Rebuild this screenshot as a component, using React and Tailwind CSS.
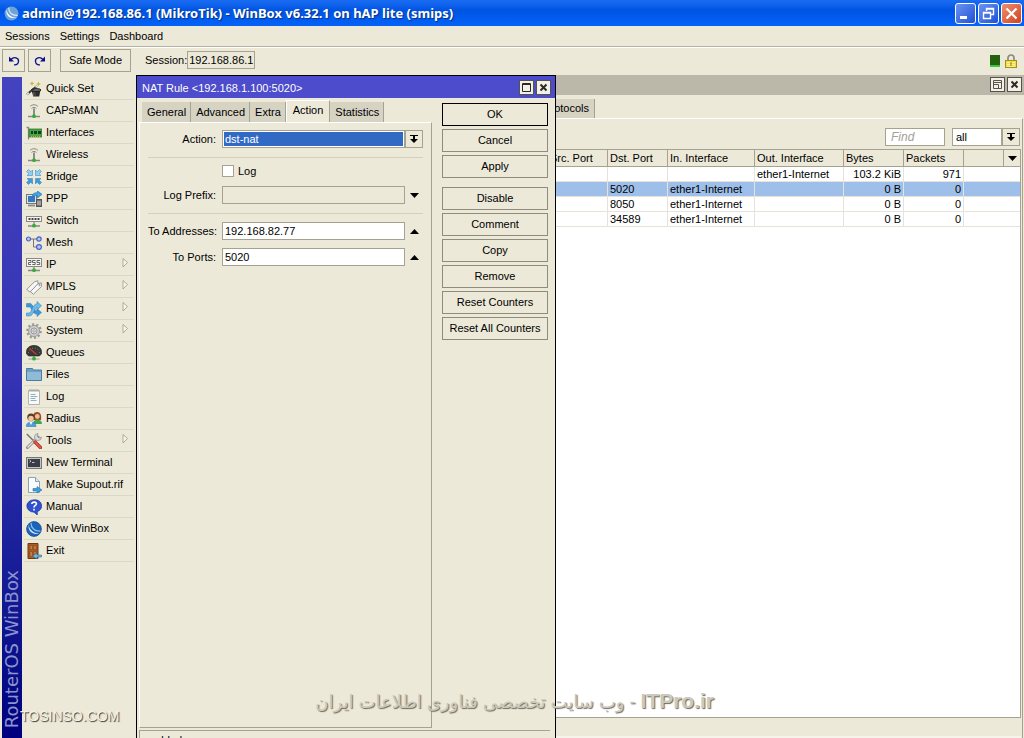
import React, { useState } from "react";

const icons = {
  "Quick Set": (
    <>
      <path d="M5.500 9h9l-1.300 6.500h-6z" fill="#2b2b2b" />
      <path d="M7.500 11v4M9 11v4" stroke="#666" strokeWidth=".8" />
      <ellipse cx="10" cy="9" rx="5" ry="1.500" fill="#6a6a6a" stroke="#111" strokeWidth=".8" />
      <path d="M.8 13.500L11 5" stroke="#333" strokeWidth="2" />
      <path d="M.8 13.500l2-1.700M9.500 6.300l1.500-1.300" stroke="#f4f4f4" strokeWidth="1.500" />
      <path d="M6 0l.7 1.800L8.500 2.500l-1.800.7L6 5l-.7-1.800L3.500 2.500l1.800-.7zM12.500.5l.7 1.800 1.800.7-1.800.7-.7 1.800-.7-1.800-1.800-.7 1.800-.7z" fill="#c9b52c" />
    </>
  ),
  CAPsMAN: <Antenna />,
  Interfaces: (
    <>
      <path d="M.5 2.500h2v12" fill="none" stroke="#8a8a8a" strokeWidth="1.300" />
      <rect x="3" y="4" width="13" height="8" fill="#4aa54a" stroke="#226d22" strokeWidth=".7" />
      <path d="M5 6h2v3H5zM8 6h3v3H8zM12 6h3v3h-3z" fill="#123f16" />
      <path d="M5 12h9" stroke="#d6c24c" strokeWidth="1.500" strokeDasharray="1 1" />
    </>
  ),
  Wireless: <Antenna />,
  Bridge: (
    <g stroke="#2c7cb8" strokeWidth=".5">
      <path d="M.5 2.500l2-2 2.300 2.300L6.500 1v5.500H1l1.800-1.700z" fill="#8fd0f2" />
      <path d="M15.500 2.500l-2-2-2.300 2.300L9.500 1v5.500H15l-1.800-1.700z" fill="#8fd0f2" />
      <path d="M.5 13.500l2 2 2.300-2.300L6.500 15V9.500H1l1.800 1.700z" fill="#3c9bdb" />
      <path d="M15.500 13.500l-2 2-2.300-2.300L9.500 15V9.500H15l-1.800 1.700z" fill="#3c9bdb" />
    </g>
  ),
  PPP: (
    <>
      <rect x=".5" y="3.500" width="10" height="9" fill="#e4e4dc" stroke="#777" />
      <rect x="2" y="5" width="7" height="6" fill="#3279c4" />
      <path d="M2 14.500h7" stroke="#888" strokeWidth="1.800" />
      <rect x="10.500" y="8.500" width="5" height="7" fill="#777" stroke="#555" />
      <path d="M11 11h4M11 13h4" stroke="#ccc" />
      <path d="M6.500 5c0-2.500 2-3.500 5-3.200V0L16 3.300 11.500 7V5C9.500 4.500 8 4.500 6.500 5z" fill="#45a4e5" stroke="#1c68a8" strokeWidth=".6" />
    </>
  ),
  Switch: (
    <>
      <rect x=".5" y="3.500" width="15" height="5" fill="#f5f5ef" stroke="#888" />
      <path d="M2.500 6h11" stroke="#444" strokeWidth="2" strokeDasharray="2 1" />
      <path d="M8 9v4" stroke="#777" />
      <path d="M2 13h12" stroke="#888" strokeWidth="1.500" />
      <circle cx="8" cy="12.700" r="1.900" fill="#38a838" />
    </>
  ),
  Mesh: (
    <>
      <path d="M4 4h8M7.500 4v8H12" fill="none" stroke="#777" />
      <g fill="#b8c8f8" stroke="#4860c8" strokeWidth="1.200">
        <circle cx="2.500" cy="4" r="2" />
        <circle cx="13" cy="4" r="2.200" />
        <circle cx="13" cy="12" r="2.400" />
      </g>
    </>
  ),
  IP: (
    <>
      <rect x=".5" y="1.500" width="15" height="8" fill="#f7f7f2" stroke="#888" />
      <path d="M2 3.500h3v2H2.500v2H5M9.500 3.500h-3v2h2.700v2H6.300M14 3.500h-3v2h2.700v2h-2.900" fill="none" stroke="#555" strokeWidth=".9" />
      <path d="M8 10v3" stroke="#777" />
      <path d="M2 13.500h12" stroke="#888" strokeWidth="1.500" />
      <circle cx="8" cy="13.200" r="1.900" fill="#38a838" />
    </>
  ),
  MPLS: (
    <g fill="#f7f7f7" stroke="#8a8a8a" strokeWidth=".9">
      <path d="M.7 10.500L8.500 2.700l3.300-.9.200 3.700-8 7.500z" />
      <path d="M4.300 12.700L12 4.700l3.300-.9.200 3.700-8 7.700z" />
      <circle cx="13.500" cy="6" r=".7" />
    </g>
  ),
  Routing: (
    <g fill="#3f97d5" stroke="#2474b4" strokeWidth=".5">
      <path d="M.5 2.500H4c3 0 4 7.500 7 7.500V7.500l4.500 4-4.500 4V13C6 13 5.500 6 3.500 6h-3z" />
      <path d="M.5 12H3c3 0 3-9 8-9V.5l4.500 4.300L11 9V6.500C8 6.500 8 15 3 15H.5z" fill="#6dbbea" />
    </g>
  ),
  System: (
    <>
      <circle cx="8" cy="8" r="6.700" fill="none" stroke="#999" strokeWidth="2.200" strokeDasharray="2.200 2" />
      <circle cx="8" cy="8" r="5.500" fill="#cfcfcf" stroke="#999" />
      <circle cx="8" cy="8" r="3" fill="#e2e2e0" stroke="#999" />
      <circle cx="8" cy="8" r="1.300" fill="#f2f0e5" stroke="#888" strokeWidth=".7" />
    </>
  ),
  Queues: (
    <>
      <path d="M.3 8.500C0 3 3.500.5 8 .5s8 2.500 7.700 8L13.500 11h-11z" fill="#383838" stroke="#1c1c1c" strokeWidth=".6" />
      <path d="M2.500 8a5.500 5 0 0 1 11 0" fill="none" stroke="#888" strokeDasharray="1 2" />
      <path d="M3.500 3.500l7 6" stroke="#d03535" strokeWidth="1.300" />
      <path d="M8 11v3" stroke="#777" />
      <path d="M2.500 14h11" stroke="#999" />
      <circle cx="8" cy="13.700" r="1.900" fill="#38b038" />
    </>
  ),
  Files: (
    <>
      <path d="M.5 13.500v-12h6l1 1.500h8v10.500z" fill="#6d9fc4" stroke="#4a7ca4" />
      <path d="M1 5h14v8H1z" fill="#8fbbd9" />
    </>
  ),
  Log: (
    <>
      <path d="M2.500 1.500h11v14h-11z" fill="#fafaf5" stroke="#b4b4ae" />
      <path d="M4 0v3M6 0v3M8 0v3M10 0v3M12 0v3" stroke="#999" strokeWidth=".8" />
      <path d="M4.500 5.500h5M4.500 7.500h7M4.500 9.500h5M4.500 11.500h6" stroke="#8fb0c9" />
    </>
  ),
  Radius: (
    <>
      <path d="M7.500 9c-1-5 0-8 3.500-8s4.700 3 4 8z" fill="#9c4b26" />
      <circle cx="11.300" cy="5.500" r="2.400" fill="#efbd91" />
      <path d="M7 13c0-3 2-4.500 4.500-4.500S16 10 16 13z" fill="#45a556" />
      <circle cx="5" cy="6.300" r="3.700" fill="#593a24" />
      <circle cx="5" cy="7.500" r="2.700" fill="#f3c59c" />
      <path d="M.3 15.500c0-3 2-4.500 4.700-4.500s5 1.500 5 4.500z" fill="#4f9de0" stroke="#2a6ba8" strokeWidth=".5" />
      <path d="M3.500 11L5 14l1.500-3z" fill="#fff" />
    </>
  ),
  Tools: (
    <>
      <path d="M.8 1l9 9" stroke="#777" strokeWidth="1.600" />
      <path d="M1.500 14.500L12 4" stroke="#888" strokeWidth="3" strokeLinecap="round" />
      <path d="M1.500 14.500L12 4" stroke="#e0e0e0" strokeWidth="1.400" />
      <path d="M12 .5a3.500 3.500 0 1 0 3.500 3.700L12.800 5 11 3.200z" fill="#ddd" stroke="#888" strokeWidth=".7" />
      <path d="M9 9l5.500 5.500" stroke="#a82c24" strokeWidth="3.400" strokeLinecap="round" />
      <path d="M9 9l5.500 5.500" stroke="#e2574c" strokeWidth="1.800" strokeLinecap="round" />
    </>
  ),
  "New Terminal": (
    <>
      <rect x=".5" y="2.500" width="15" height="11" fill="#c5c5c5" stroke="#777" />
      <rect x="2" y="4" width="12" height="8" fill="#3c3c46" />
      <path d="M3.500 5l1.500 1.200-1.500 1.200M6 7.500h2.500" fill="none" stroke="#eee" strokeWidth=".8" />
    </>
  ),
  "Make Supout.rif": (
    <>
      <path d="M2.500.5h7l4 4v11h-11z" fill="#fbfbfb" stroke="#8ba2b4" />
      <path d="M9.500.5v4h4" fill="#dce8f0" stroke="#8ba2b4" />
      <path d="M7 11.500h4v-2l5 3.500-5 3v-2H7z" fill="#3f9fdd" stroke="#2270a8" strokeWidth=".6" />
    </>
  ),
  Manual: (
    <>
      <path d="M8 .8a7.200 6.200 0 0 1 3.300 11.900V16l-3.300-2.800A7.200 6.200 0 1 1 8 .8z" fill="#2f50d0" stroke="#162d91" strokeWidth=".6" />
      <path d="M5.800 5c.3-2.700 4.900-2.400 4.600 0C10.200 6.500 8 6.500 8 8.500M8 9.800v1.600" fill="none" stroke="#fff" strokeWidth="1.600" />
    </>
  ),
  "New WinBox": <Globe />,
  Exit: (
    <>
      <path d="M2 .5h10v15H2z" fill="#a85d26" stroke="#6d3812" />
      <path d="M4 2.500h2.500v4H4zM7.800 2.500h2.500v4H7.800zM4 8.500h2.500v5H4zM7.800 8.500h2.500v3H7.800z" fill="#c98043" stroke="#7f4519" strokeWidth=".6" />
      <path d="M15.500 12H11v-2l-4.500 3 4.500 3v-2h4.500z" fill="#6db9ea" stroke="#2d6d9c" strokeWidth=".6" />
    </>
  ),
};

const menuItems = [
  "Quick Set",
  "CAPsMAN",
  "Interfaces",
  "Wireless",
  "Bridge",
  "PPP",
  "Switch",
  "Mesh",
  "IP",
  "MPLS",
  "Routing",
  "System",
  "Queues",
  "Files",
  "Log",
  "Radius",
  "Tools",
  "New Terminal",
  "Make Supout.rif",
  "Manual",
  "New WinBox",
  "Exit",
];

const withSubmenu = ["IP", "MPLS", "Routing", "System", "Tools"];

const rules = [
  { dst: "", inIf: "", outIf: "ether1-Internet", bytes: "103.2 KiB", packets: "971" },
  { dst: "5020", inIf: "ether1-Internet", outIf: "", bytes: "0 B", packets: "0" },
  { dst: "8050", inIf: "ether1-Internet", outIf: "", bytes: "0 B", packets: "0" },
  { dst: "34589", inIf: "ether1-Internet", outIf: "", bytes: "0 B", packets: "0" },
];

function Antenna() {
  return (
    <>
      <path d="M4 3.500c2-2.300 6-2.300 8 0M5.500 5.500c1.500-1.500 3.500-1.500 5 0" fill="none" stroke="#8b8b8b" />
      <path d="M8 5.500v7" stroke="#666" strokeWidth="1.400" />
      <path d="M2 13.500h12" stroke="#888" strokeWidth="1.500" />
      <circle cx="8" cy="13.200" r="1.900" fill="#38a838" />
    </>
  );
}

function Globe() {
  return (
    <>
      <circle cx="8" cy="8" r="7.400" fill="#1a64bc" stroke="#0e4288" strokeWidth=".7" />
      <path d="M2.500 4C2 11 7 14 13.500 12.500 8 12.500 4 9.500 2.500 4z" fill="#d5e9fb" />
      <path d="M5 1.800C5 7 8.500 10.500 14.500 10" fill="none" stroke="#8fc0ee" strokeWidth="1.200" />
    </>
  );
}

function Icon({ children }) {
  return (
    <svg viewBox="0 0 16 16" className="h-4 w-4 shrink-0" aria-hidden="true">
      {children}
    </svg>
  );
}

function CloseGlyph() {
  return (
    <svg viewBox="0 0 11 11" className="h-[11px] w-[11px]">
      <path d="M2.500 2.500l6 6M8.500 2.500l-6 6" stroke="#2d2a24" strokeWidth="2" />
    </svg>
  );
}

function DropGlyph() {
  return (
    <svg viewBox="0 0 10 10" className="h-[10px] w-[10px]">
      <path d="M1 1.500h8" stroke="#000" />
      <path d="M4 2h2v3h3L5 9 1 5h3z" fill="#000" />
    </svg>
  );
}

function Triangle({ up }) {
  return (
    <svg viewBox="0 0 9 5" className="h-[5px] w-[9px]">
      <path d={up ? "M0 5L4.500 0 9 5z" : "M0 0h9L4.500 5z"} fill="#000" />
    </svg>
  );
}

function SmallButton({ label, onClick, children }) {
  return (
    <button
      aria-label={label}
      onClick={onClick}
      className="flex h-[15px] w-[15px] items-center justify-center border border-[#57534a] bg-[#f3f1e7]"
    >
      {children}
    </button>
  );
}

function DropButton({ label }) {
  return (
    <button
      aria-label={label}
      className="flex h-[18px] w-[18px] items-center justify-center border border-[#a5a291] bg-[#ece9d8]"
    >
      <DropGlyph />
    </button>
  );
}

function TitleBar() {
  const btn = "flex h-[21px] w-[21px] items-center justify-center rounded-[3px] border border-white";
  return (
    <header className="flex h-[26px] shrink-0 items-center bg-linear-to-b from-[#1a6df2] via-[#0054e3] via-40% to-[#0463fa] pr-[2px] pl-1">
      <svg viewBox="0 0 16 16" className="h-[15px] w-[15px]">
        <circle cx="8" cy="8" r="7.400" fill="#6ea3da" />
        <path d="M2.500 4C2 11 7 14 13.500 12.500 8 12.500 4 9.500 2.500 4z" fill="#fff" />
        <path d="M5 1.800C5 7 8.500 10.500 14.500 10" fill="none" stroke="#d8eafc" strokeWidth="1.200" />
      </svg>
      <h1 className="ml-[3px] flex-1 font-['Noto_Sans',sans-serif] text-[13px] leading-none font-bold whitespace-nowrap text-white [text-shadow:1px_1px_1px_#0a2f86]">
        admin@192.168.86.1 (MikroTik) - WinBox v6.32.1 on hAP lite (smips)
      </h1>
      <div className="flex gap-[2px]">
        <button aria-label="Minimize" className={`${btn} bg-linear-to-br from-[#6b93f0] to-[#1f4fd6]`}>
          <svg viewBox="0 0 19 19" className="h-[19px] w-[19px]">
            <path d="M4 12h7v3H4z" fill="#fff" />
          </svg>
        </button>
        <button aria-label="Restore" className={`${btn} bg-linear-to-br from-[#6b93f0] to-[#1f4fd6]`}>
          <svg viewBox="0 0 19 19" className="h-[19px] w-[19px]" fill="none" stroke="#fff">
            <path d="M7.500 7V4.500h7v6H12M7 5h8M4.500 8.500h7v6h-7zM4 9h8" strokeWidth="1.400" />
          </svg>
        </button>
        <button aria-label="Close" className={`${btn} bg-linear-to-br from-[#ee8d6d] to-[#d0401c]`}>
          <svg viewBox="0 0 19 19" className="h-[19px] w-[19px]">
            <path d="M4.500 4.500l10 10M14.500 4.500l-10 10" stroke="#fff" strokeWidth="2.300" />
          </svg>
        </button>
      </div>
    </header>
  );
}

function Toolbar() {
  const btn = "flex h-[23px] items-center justify-center border border-[#a5a291] bg-[#ece9d8]";
  return (
    <div className="flex h-7 shrink-0 items-start border-t border-white pt-[1px] pr-[7px] pl-[2px]">
      <button aria-label="Undo" className={`${btn} w-[23px]`}>
        <svg viewBox="0 0 12 12" className="h-3 w-3">
          <path d="M3 4.500C6 1 11 3 10.500 6.500 10.200 9 8 10 6 9.800" fill="none" stroke="#10108c" strokeWidth="1.300" />
          <path d="M1 1.500v5h5z" fill="#10108c" />
        </svg>
      </button>
      <button aria-label="Redo" className={`${btn} ml-[3px] w-[23px]`}>
        <svg viewBox="0 0 12 12" className="h-3 w-3">
          <path d="M9 4.500C6 1 1 3 1.500 6.500 1.800 9 4 10 6 9.800" fill="none" stroke="#10108c" strokeWidth="1.300" />
          <path d="M11 1.500v5H6z" fill="#10108c" />
        </svg>
      </button>
      <button className={`${btn} ml-[9px] w-[71px]`}>Safe Mode</button>
      <label htmlFor="session" className="ml-[14px] flex h-[23px] items-center">
        Session:
      </label>
      <input
        id="session"
        readOnly
        defaultValue="192.168.86.1"
        className="mt-[2px] h-[18px] w-[68px] border border-[#a5a291] bg-transparent pl-[1px]"
      />
      <div className="ml-auto flex h-[23px] items-center gap-[5px]">
        <div className="flex h-3 w-[10px] flex-col justify-end bg-[#23620f]">
          <span className="h-[2px] bg-[#39c93a]" />
        </div>
        <svg viewBox="0 0 12 14" className="h-[14px] w-3">
          <path d="M3 7V4a3 3 0 0 1 6 0v3" fill="none" stroke="#8b8b84" strokeWidth="1.700" />
          <rect x=".5" y="6.500" width="11" height="7" fill="#f2dc4b" stroke="#a58f1b" />
          <path d="M2 8.500h8M2 10.500h8M2 12.300h8" stroke="#fff6a8" strokeWidth=".8" />
          <path d="M6 8v4" stroke="#8a7618" />
        </svg>
      </div>
    </div>
  );
}

function Sidebar() {
  return (
    <aside className="flex w-[136px] shrink-0 pt-[2px] pl-[2px]">
      <div className="flex w-5 items-end justify-center bg-linear-to-b from-[#4343c0] via-[#3434b4] via-45% to-[#00007e] pb-[10px]">
        <span className="rotate-180 font-['DejaVu_Sans',sans-serif] text-[18px] leading-5 whitespace-nowrap text-[#8e93cf] [writing-mode:vertical-rl]">
          RouterOS WinBox
        </span>
      </div>
      <nav className="ml-[2px] flex w-[110px] flex-col pt-[1px]">
        {menuItems.map((item) => (
          <button
            key={item}
            className="flex h-[22px] items-center border-b border-[#dbd8c8] pl-[2px] text-left whitespace-nowrap"
          >
            <Icon>{icons[item]}</Icon>
            <span className="ml-1 flex-1">{item}</span>
            {withSubmenu.includes(item) && (
              <svg viewBox="0 0 7 11" className="mr-[5px] mb-1 h-[11px] w-[7px]">
                <path d="M1 10V1.500l4.500 4L1 10" fill="#f8f6ec" stroke="#9c998a" strokeWidth=".8" />
              </svg>
            )}
          </button>
        ))}
      </nav>
    </aside>
  );
}

function FirewallWindow() {
  const th = "border-r border-[#a5a291] px-[2px] text-left font-normal whitespace-nowrap";
  const td = "border-r border-[#e6e4da] px-[2px] whitespace-nowrap";
  return (
    <section className="flex h-full flex-col">
      <div className="flex h-5 shrink-0 items-start justify-end gap-[2px] bg-[#bcb8a9] pt-[2px] pr-[2px]">
        <SmallButton label="Restore window">
          <svg viewBox="0 0 11 11" className="h-[11px] w-[11px]" fill="none" stroke="#57534a">
            <path d="M1.500 1.500h8v8h-8zM1.500 5.500h5v4M1.500 3.500h8" />
          </svg>
        </SmallButton>
        <SmallButton label="Close window">
          <CloseGlyph />
        </SmallButton>
      </div>
      <div className="flex pt-1">
        <div className="flex w-[459px] justify-end">
          <button className="h-[19px] border-r border-[#a5a291] bg-[#d6d3c3] px-[5px]">Layer7 Protocols</button>
        </div>
      </div>
      <div className="mr-[1px] flex flex-1 flex-col border-t border-r border-t-white border-r-[#a5a291] pt-[9px] pr-[1px]">
        <div className="flex justify-end pr-[1px] pb-[3px]">
          <input
            aria-label="Find"
            placeholder="Find"
            className="h-[18px] w-[60px] border border-[#a5a291] bg-white px-[5px] text-[12px] placeholder:text-[#a3a199] placeholder:italic"
          />
          <select
            aria-label="Chain"
            className="ml-[7px] h-[18px] w-[50px] appearance-none border border-[#a5a291] bg-white px-[3px]"
          >
            <option>all</option>
          </select>
          <DropButton label="Choose chain" />
        </div>
        <div className="flex-1 border-r border-b border-[#a5a291] bg-white">
          <table className="w-full table-fixed border-separate border-spacing-0">
            <colgroup>
              <col />
              <col className="w-[60px]" />
              <col className="w-[60px]" />
              <col className="w-[87px]" />
              <col className="w-[89px]" />
              <col className="w-[60px]" />
              <col className="w-[60px]" />
              <col className="w-[40px]" />
              <col className="w-[16px]" />
            </colgroup>
            <thead className="bg-[#ece9d8] [&_th]:border-t [&_th]:border-b">
              <tr className="h-[18px] leading-[14px]">
                <th className={th}></th>
                <th className={th}>Src. Port</th>
                <th className={th}>Dst. Port</th>
                <th className={th}>In. Interface</th>
                <th className={th}>Out. Interface</th>
                <th className={th}>Bytes</th>
                <th className={th}>Packets</th>
                <th className={th}></th>
                <th className="border-[#a5a291] p-0">
                  <button aria-label="Columns" className="flex w-full justify-center">
                    <Triangle />
                  </button>
                </th>
              </tr>
            </thead>
            <tbody className="[&_td]:border-b">
              {rules.map((rule, i) => (
                <tr key={i} className={i === 1 ? "h-[15px] bg-[#9ebfea] leading-[14px]" : "h-[15px] leading-[14px]"}>
                  <td className={td}></td>
                  <td className={td}></td>
                  <td className={td}>{rule.dst}</td>
                  <td className={td}>{rule.inIf}</td>
                  <td className={td}>{rule.outIf}</td>
                  <td className={`${td} text-right`}>{rule.bytes}</td>
                  <td className={`${td} text-right`}>{rule.packets}</td>
                  <td colSpan={2} className="border-[#e6e4da]"></td>
                </tr>
              ))}
            </tbody>
          </table>
        </div>
        <div className="h-[18px] shrink-0" />
        <div className="h-[2px] shrink-0 bg-[#f6f4ea]" />
      </div>
    </section>
  );
}

function NatRuleDialog() {
  const [tab, setTab] = useState("Action");
  const tabs = ["General", "Advanced", "Extra", "Action", "Statistics"];
  const label = "w-[74px] pr-[6px] text-right whitespace-nowrap";
  const field = "h-[18px] w-[183px] border border-[#a5a291] px-[2px]";
  const action = "h-[23px] border border-[#8f8c7d] bg-[#ece9d8]";

  return (
    <section className="absolute top-0 left-0 flex h-full w-[420px] flex-col border-x border-t border-black bg-[#ece9d8]">
      <div className="flex h-[22px] shrink-0 items-center bg-[#4c4ccc] pr-1 pl-[5px] text-white">
        <h2 className="flex-1 pt-[3px]">NAT Rule &lt;192.168.1.100:5020&gt;</h2>
        <div className="flex gap-[2px]">
          <SmallButton label="Maximize dialog">
            <svg viewBox="0 0 11 11" className="h-[11px] w-[11px]">
              <path d="M1.500 1.500h8v8h-8zM1 2.500h9" fill="none" stroke="#2d2a24" />
            </svg>
          </SmallButton>
          <SmallButton label="Close dialog">
            <CloseGlyph />
          </SmallButton>
        </div>
      </div>

      <div className="flex flex-1">
        <div className="flex flex-1 flex-col pl-[2px]">
          <div className="flex h-6 items-end pl-[3px]">
            {tabs.map((t) => (
              <button
                key={t}
                onClick={() => setTab(t)}
                className={
                  t === tab
                    ? "h-[22px] border-t border-r border-l border-t-white border-r-[#a5a291] border-l-white px-[6px] pb-[2px]"
                    : "h-5 border-r border-[#a5a291] bg-[#d6d3c3] pr-1 pl-[5px]"
                }
              >
                {t}
              </button>
            ))}
          </div>
          <div className="flex flex-1 flex-col border-t border-r border-b border-l border-t-white border-r-[#a5a291] border-b-[#a5a291] border-l-white px-2 pt-[7px]">
            <div className="flex items-center">
              <label htmlFor="action" className={label}>Action:</label>
              <div className="flex">
                <div className="h-[18px] w-[183px] border border-[#a5a291] bg-white p-[1px]">
                  <select id="action" className="block h-[14px] w-full appearance-none bg-[#316ac5] px-[1px] leading-[14px] text-white">
                    <option>dst-nat</option>
                  </select>
                </div>
                <DropButton label="Choose action" />
              </div>
            </div>
            <hr className="mt-[9px] mb-[7px] border-[#d3d0bf]" />
            <div className="flex h-3 items-center pl-[74px]">
              <input
                id="log"
                type="checkbox"
                className="h-3 w-3 appearance-none border border-[#a5a291] bg-white checked:bg-[#316ac5]"
              />
              <label htmlFor="log" className="pl-1">Log</label>
            </div>
            <div className="mt-[9px] flex items-center">
              <label htmlFor="prefix" className={label}>Log Prefix:</label>
              <input id="prefix" disabled className={`${field} bg-transparent`} />
              <button aria-label="Show log prefix" className="ml-[5px]"><Triangle /></button>
            </div>
            <hr className="mt-[9px] mb-2 border-[#d3d0bf]" />
            <div className="flex items-center">
              <label htmlFor="addresses" className={label}>To Addresses:</label>
              <input id="addresses" defaultValue="192.168.82.77" className={`${field} bg-white`} />
              <button aria-label="Hide to addresses" className="ml-[5px]"><Triangle up /></button>
            </div>
            <div className="mt-2 flex items-center">
              <label htmlFor="ports" className={label}>To Ports:</label>
              <input id="ports" defaultValue="5020" className={`${field} bg-white`} />
              <button aria-label="Hide to ports" className="ml-[5px]"><Triangle up /></button>
            </div>
          </div>
        </div>

        <div className="mr-[7px] ml-[10px] flex w-[106px] flex-col gap-[3px] pt-[5px]">
          <button className="h-[23px] border border-black bg-[#ece9d8]">OK</button>
          <button className={action}>Cancel</button>
          <button className={action}>Apply</button>
          <button className={`${action} mt-[6px]`}>Disable</button>
          <button className={action}>Comment</button>
          <button className={action}>Copy</button>
          <button className={action}>Remove</button>
          <button className={action}>Reset Counters</button>
          <button className={action}>Reset All Counters</button>
        </div>
      </div>

      {/* status line runs past the bottom of the screen */}
      <div className="mt-[2px] ml-[2px] mr-[5px] h-2 shrink-0 overflow-hidden border-t border-l border-[#a5a291] pt-[3px] pl-[3px]">
        <p className="leading-[13px]">enabled</p>
      </div>
    </section>
  );
}

export default function App() {
  return (
    <div className="relative flex h-screen flex-col overflow-hidden bg-[#ece9d8] font-['Liberation_Sans',Arial,sans-serif] text-[11px] text-black">
      <TitleBar />
      <nav className="flex h-5 shrink-0 items-center gap-[10px] pl-[5px]">
        <button>Sessions</button>
        <button>Settings</button>
        <button>Dashboard</button>
      </nav>
      <hr className="border-[#b5b2a2]" />
      <Toolbar />
      <div className="flex min-h-0 flex-1">
        <Sidebar />
        <main className="relative min-w-0 flex-1 overflow-hidden">
          <FirewallWindow />
          <NatRuleDialog />
        </main>
      </div>

      {/* watermarks */}
      <p className="pointer-events-none absolute bottom-[11px] left-5 text-[14px] text-[#f4f2e8] [text-shadow:1px_1px_1px_#3d3b33]">
        TOSINSO.COM
      </p>
      <p
        dir="rtl"
        className="pointer-events-none absolute right-[310px] bottom-[22px] font-['Liberation_Sans','DejaVu_Sans',sans-serif] text-[18px] whitespace-nowrap text-[#cbc9bd] [text-shadow:1px_1px_1px_#6c6a60]"
      >
        <span className="text-[21px] font-bold">ITPro.ir</span> - وب سایت تخصصی فناوری اطلاعات ایران
      </p>
    </div>
  );
}
